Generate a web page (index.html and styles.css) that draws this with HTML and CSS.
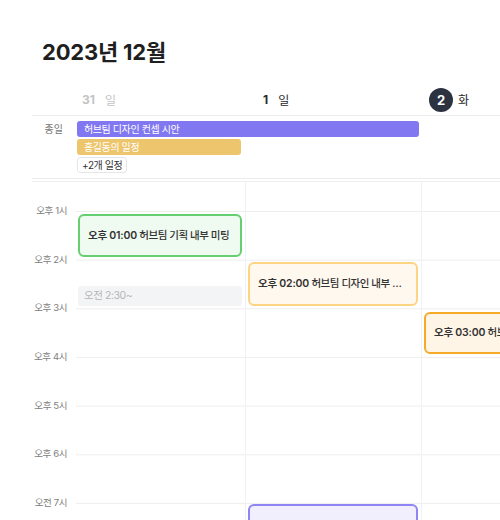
FILE: index.html
```html
<!DOCTYPE html>
<html lang="ko">
<head>
    <meta charset="UTF-8">
    <meta name="viewport" content="width=device-width, initial-scale=1.0">
    <title>2023년 12월</title>
    <link rel="stylesheet" href="styles.css">
</head>
<body>
    <div class="calendar">
        <h1 class="title">2023년 12월</h1>

        <div class="week-head">
            <div class="gutter"></div>
            <div class="day-head day-head--past"><b>31</b><span>일</span></div>
            <div class="day-head day-head--mid"><b>1</b><span>일</span></div>
            <div class="day-head day-head--today"><b class="today-badge">2</b><span>화</span></div>
        </div>

        <div class="allday">
            <div class="allday-label">종일</div>
            <div class="allday-events">
                <div class="allday-item allday-item--purple span-2">허브팀 디자인 컨셉 시안</div>
                <div class="allday-item allday-item--yellow">홍길동의 일정</div>
                <div class="more-btn">+2개 일정</div>
            </div>
        </div>

        <div class="time-grid">
            <div class="gutter hours">
                <div class="hour-lead"></div>
                <div class="hour"><span>오후 1시</span></div>
                <div class="hour"><span>오후 2시</span></div>
                <div class="hour"><span>오후 3시</span></div>
                <div class="hour"><span>오후 4시</span></div>
                <div class="hour"><span>오후 5시</span></div>
                <div class="hour"><span>오후 6시</span></div>
                <div class="hour"><span>오전 7시</span></div>
            </div>
            <div class="day-col first">
                <div class="event event--green" style="top: 32px; height: 43px;"><b>오후 01:00</b> 허브팀 기획 내부 미팅</div>
                <div class="event event--ghost" style="top: 104px; height: 20px;">오전 2:30~</div>
            </div>
            <div class="day-col">
                <div class="event event--orange" style="top: 80px; height: 44px;"><b>오후 02:00</b> 허브팀 디자인 내부 미팅</div>
                <div class="event event--purple" style="top: 322px; height: 44px;"></div>
            </div>
            <div class="day-col">
                <div class="event event--amber" style="top: 130px; height: 42px;"><b>오후 03:00</b> 허브팀 외부 미팅</div>
            </div>
        </div>
    </div>
</body>
</html>
```

FILE: styles.css
```css
* {
    box-sizing: border-box;
}

body {
    margin: 0;
    width: 500px;
    height: 520px;
    overflow: hidden;
    background: #fff;
    font-family: Inter, "Noto Sans CJK KR", sans-serif;
    color: #222;
}

.calendar {
    padding: 36px 0 0 32px;
    width: 500px;
    height: 520px;
    overflow: hidden;
}

.title {
    margin: 0 0 16px 10px;
    font-size: 22px;
    line-height: 32px;
    font-weight: 700;
    letter-spacing: -0.2px;
    color: #1f1f1f;
}

.week-head,
.allday,
.time-grid {
    display: grid;
    grid-template-columns: 44px 169px 176px 1fr;
}

.week-head {
    height: 32px;
    align-items: center;
    border-bottom: 1px solid #ececec;
    font-size: 12px;
}

.day-head {
    display: flex;
    align-items: center;
    gap: 10px;
}

.day-head b {
    font-weight: 700;
}

.day-head--past {
    padding-left: 6px;
    color: #c4c4c4;
}

.day-head--mid {
    padding-left: 18px;
    color: #2a2a2a;
}

.day-head--today {
    padding-left: 8px;
    gap: 5px;
    color: #2a2a2a;
}

.today-badge {
    width: 24px;
    height: 24px;
    border-radius: 50%;
    background: #2c3340;
    color: #fff;
    display: flex;
    align-items: center;
    justify-content: center;
    font-size: 13px;
}

.allday {
    padding: 5px 0 5px;
    border-bottom: 1px solid #ececec;
}

.allday-label {
    font-size: 10px;
    color: #777;
    text-align: right;
    padding-right: 13px;
    line-height: 16px;
}

.allday-events {
    grid-column: 2 / 4;
    display: flex;
    flex-direction: column;
    align-items: flex-start;
    gap: 2px;
    padding-left: 1px;
}

.allday-item {
    height: 16px;
    line-height: 16px;
    border-radius: 3px;
    padding-left: 7px;
    font-size: 10px;
    letter-spacing: -0.4px;
    color: #fff;
    width: 164px;
}

.allday-item.span-2 {
    width: 342px;
}

.allday-item--purple {
    background: #8177f0;
}

.allday-item--yellow {
    background: #ecc56c;
}

.more-btn {
    height: 16px;
    line-height: 14px;
    padding: 0 4px;
    border: 1px solid #e6e6e6;
    border-radius: 3px;
    font-size: 10px;
    letter-spacing: -0.4px;
    color: #333;
    background: #fff;
}

.time-grid {
    margin-top: 2px;
    border-top: 1px solid #f0f0f0;
    height: 400px;
}

.hours {
    font-size: 9.5px;
    letter-spacing: -0.4px;
    color: #7d7d7d;
}

.hour-lead {
    height: 29px;
}

.hour {
    height: 48.67px;
    display: flex;
    justify-content: flex-end;
    padding-right: 9px;
}

.hour span {
    white-space: nowrap;
    line-height: 12px;
    height: 12px;
    transform: translateY(-6px);
}

.day-col {
    position: relative;
    border-left: 1px solid #f0f0f8;
    background-image: linear-gradient(#eeeeee 1px, transparent 1px);
    background-size: 100% 48.67px;
    background-position: 0 29px;
}

.day-col.first {
    border-left: none;
}

.event {
    position: absolute;
    left: 2px;
    right: 3px;
    padding: 0 6px 0 8px;
    font-size: 10.5px;
    letter-spacing: -0.45px;
    font-weight: 500;
    color: #333;
    border-radius: 6px;
    white-space: nowrap;
    overflow: hidden;
    text-overflow: ellipsis;
}

.event b {
    font-weight: 600;
    letter-spacing: -0.2px;
}

.event--green {
    line-height: 39px;
    border: 2px solid #66cf72;
    background: #effaf0;
}

.event--ghost {
    line-height: 20px;
    border-radius: 3px;
    background: #f3f4f6;
    color: #b5b5b5;
    font-weight: 400;
    font-size: 10.5px;
    padding-left: 6px;
}

.event--orange {
    line-height: 40px;
    border: 2px solid #fcd483;
    background: #fff8ef;
    padding-right: 14px;
}

.event--amber {
    right: auto;
    width: 200px;
    line-height: 38px;
    border: 2px solid #f5aa2a;
    background: #fff5e6;
}

.event--purple {
    border: 2px solid #8e84f2;
    background: #f1effe;
}
```
